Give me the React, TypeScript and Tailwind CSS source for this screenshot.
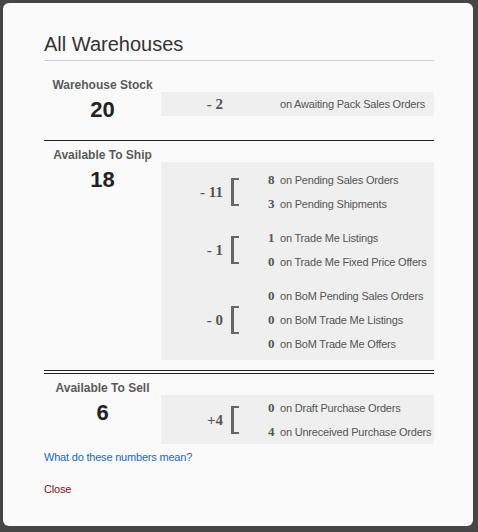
const sans = "font-['Liberation_Sans',Arial,sans-serif]";
const serif = "font-['Liberation_Serif','Times_New_Roman',serif]";

type Row = { n?: string; text: string };
type Group = { total: string; bracket: boolean; rows: Row[] };

const stock: Group[] = [{ total: '- 2', bracket: false, rows: [{ text: 'on Awaiting Pack Sales Orders' }] }];

const ship: Group[] = [
  {
    total: '- 11',
    bracket: true,
    rows: [
      { n: '8', text: 'on Pending Sales Orders' },
      { n: '3', text: 'on Pending Shipments' },
    ],
  },
  {
    total: '- 1',
    bracket: true,
    rows: [
      { n: '1', text: 'on Trade Me Listings' },
      { n: '0', text: 'on Trade Me Fixed Price Offers' },
    ],
  },
  {
    total: '- 0',
    bracket: true,
    rows: [
      { n: '0', text: 'on BoM Pending Sales Orders' },
      { n: '0', text: 'on BoM Trade Me Listings' },
      { n: '0', text: 'on BoM Trade Me Offers' },
    ],
  },
];

const sell: Group[] = [
  {
    total: '+4',
    bracket: true,
    rows: [
      { n: '0', text: 'on Draft Purchase Orders' },
      { n: '4', text: 'on Unreceived Purchase Orders' },
    ],
  },
];

function GroupRow({ group }: { group: Group }) {
  return (
    <div className="flex items-center">
      <div className={`w-[62px] text-right text-[15px] font-bold text-[#555] ${serif}`}>{group.total}</div>
      <div className="ml-[8px] w-[8px]">
        {group.bracket && <div className="w-[8px] h-[28px] border-l-[3px] border-y-2 border-[#666]" />}
      </div>
      <div className="ml-[29px] flex flex-col">
        {group.rows.map((r) => (
          <div key={r.text} className="flex items-center leading-[24px] whitespace-nowrap">
            <span className={`w-[12px] text-[13px] font-bold text-[#555] ${serif}`}>{r.n}</span>
            <span className={`text-[11px] tracking-[-0.2px] text-[#555] ${sans}`}>{r.text}</span>
          </div>
        ))}
      </div>
    </div>
  );
}

function Section({ label, value, groups, pad }: { label: string; value: string; groups: Group[]; pad: string }) {
  return (
    <div className="flex flex-col">
      <div className={`w-[117px] text-center text-[12px] leading-[14px] font-bold text-[#5a5a5a] ${sans}`}>{label}</div>
      <div className="flex items-start">
        <div className={`w-[117px] text-center text-[22px] leading-[36px] font-bold text-[#222] ${sans}`}>{value}</div>
        <div className={`flex-1 bg-[#efefef] flex flex-col gap-[10px] ${pad}`}>
          {groups.map((g) => (
            <GroupRow key={g.total} group={g} />
          ))}
        </div>
      </div>
    </div>
  );
}

export default function App() {
  return (
    <div className="w-[478px] h-[532px] bg-[#464646] pt-[3px] pl-[3px]">
      <div className="w-[470px] h-[523px] bg-[#fafafa] rounded-[6px] pl-[41px] pr-[39px] pt-[29px]">
        <h2 className={`text-[20px] leading-[24px] text-[#333] ${sans}`}>All Warehouses</h2>
        <div className="mt-[4px] h-px bg-[#d0d0d0]" />

        <div className="pt-[17px]">
          <Section label="Warehouse Stock" value="20" groups={stock} pad="" />
        </div>
        <div className="mt-[12px] h-px bg-[#222]" />

        <div className="pt-[7px]">
          <Section label="Available To Ship" value="18" groups={ship} pad="pt-[6px] pb-[4px]" />
        </div>
        <div className="mt-[10px] h-[4px] border-y border-[#222]" />

        <div className="pt-[7px]">
          <Section label="Available To Sell" value="6" groups={sell} pad="pt-[1px]" />
        </div>

        <div className={`mt-[5px] text-[11px] tracking-[-0.2px] leading-[16px] text-[#1567d3] ${sans}`}>What do these numbers mean?</div>
        <div className={`mt-[16px] text-[11px] tracking-[-0.2px] leading-[16px] text-[#8b1111] ${sans}`}>Close</div>
      </div>
    </div>
  );
}
